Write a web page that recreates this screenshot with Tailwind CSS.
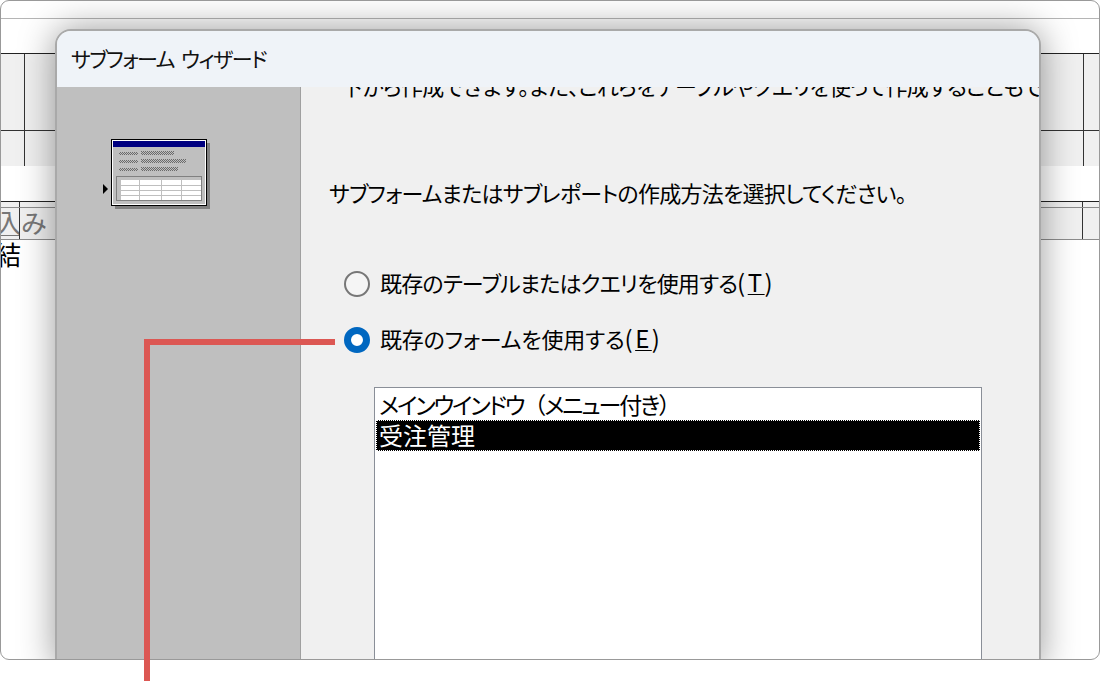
<!DOCTYPE html>
<html lang="ja">
<head>
  <meta charset="UTF-8">
  <title>サブフォーム ウィザード</title>
  <script src="https://cdn.jsdelivr.net/npm/@tailwindcss/browser@4"></script>
</head>
<body class="bg-white w-[1100px] h-[681px] overflow-hidden relative font-['Noto_Sans_CJK_JP',sans-serif] [font-feature-settings:'palt'] text-black">

  <!-- Background form design view, dialog sits on top and is clipped by the frame -->
  <div class="relative w-[1100px] h-[660px] border border-[#999] rounded-[9px] overflow-hidden bg-white">
    <div class="h-[18px] border-b border-[#b5b5b5]"></div>
    <div class="h-[35px] border-b border-[#222]"></div>
    <div class="h-[77px] border-b border-[#333] flex bg-[#f0f0f0]">
      <div class="w-[24px] border-r border-[#333]"></div>
      <div class="w-[1059px] border-r border-[#333]"></div>
    </div>
    <div class="h-[35px] flex bg-[#f0f0f0]">
      <div class="w-[24px] border-r border-[#333]"></div>
      <div class="w-[1059px] border-r border-[#333]"></div>
    </div>
    <div class="h-[36px] border-b border-[#222]"></div>
    <div class="h-[38px] border-b border-[#8c8c8c] flex relative bg-[#f0f0f0] text-[26px] leading-[30px] text-[#777]">
      <div class="w-[24px] border-r border-[#333] pt-[5px] -ml-[5px] pl-[5px] overflow-hidden"><span class="underline underline-offset-2 decoration-1 -ml-[5px]">入</span></div>
      <div class="w-[1063px] border-r border-[#333] pt-[5px] pl-[1px] whitespace-nowrap overflow-hidden">み<span class="ml-[9px] text-[#a5774f]">方</span></div>
      <div class="absolute left-0 right-0 top-[5px] border-t border-[#8c8c8c]"></div>
    </div>
    <div class="text-[26px] leading-[30px] -ml-[6px] -mt-px">結</div>

    <!-- Dialog window -->
    <div class="absolute left-[54px] top-[28px] w-[986px] h-[640px] border-2 border-[#a9a9a9] rounded-t-[16px] overflow-hidden flex flex-col shadow-[0_0_36px_rgba(0,0,0,0.4)] bg-[#f0f0f0]">
      <div class="h-[56px] bg-[#eff3f8] shrink-0 pl-[14px] text-[21px] tracking-[-1.5px] [word-spacing:4px] leading-[54px] text-[#111]">サブフォーム ウィザード</div>
      <div class="flex flex-1 min-h-0">
        <!-- Left picture panel -->
        <div class="w-[244px] shrink-0 bg-[#bfbfbf] border-r border-[#a0a0a0] pl-[46px] pt-[50px]">
          <svg width="110" height="74" viewBox="0 0 110 74" shape-rendering="crispEdges">
            <defs>
              <pattern id="dots" width="2" height="2" patternUnits="userSpaceOnUse">
                <rect width="1" height="1" fill="#6a6a6a"/><rect x="1" y="1" width="1" height="1" fill="#6a6a6a"/>
              </pattern>
            </defs>
            <path d="M0 47 l5 5 l-5 5 z" fill="#000" shape-rendering="auto"/>
            <rect x="12" y="6" width="95" height="66" fill="#808080"/>
            <rect x="8" y="2" width="96" height="67" fill="#000"/>
            <rect x="9" y="3" width="94" height="65" fill="#fff"/>
            <rect x="10" y="4" width="92" height="63" fill="#bfbfbf"/>
            <rect x="10" y="4" width="92" height="6" fill="#000080"/>
            <rect x="16" y="15" width="19" height="3" fill="url(#dots)"/>
            <rect x="38" y="14" width="33" height="4" fill="url(#dots)"/>
            <rect x="16" y="23" width="19" height="3" fill="url(#dots)"/>
            <rect x="38" y="22" width="45" height="4" fill="url(#dots)"/>
            <rect x="16" y="31" width="19" height="3" fill="url(#dots)"/>
            <rect x="38" y="30" width="37" height="4" fill="url(#dots)"/>
            <rect x="13" y="39" width="86" height="25" fill="#808080"/>
            <rect x="14" y="40" width="84" height="23" fill="#fff"/>
            <rect x="14" y="40" width="84" height="3" fill="#bfbfbf"/>
            <rect x="14" y="40" width="4" height="23" fill="#bfbfbf"/>
            <path d="M14 48h84M14 53h84M14 58h84M36 40v23M58 40v23M78 40v23" stroke="#bfbfbf" fill="none"/>
          </svg>
        </div>
        <!-- Right content -->
        <div class="flex-1 min-w-0 overflow-hidden">
          <p class="-mt-[15px] pl-[40px] h-[26px] whitespace-nowrap text-[22px] tracking-[-0.75px] leading-[26px]">下から作成できます。また、これらをテーブルやクエリを使って作成することもでき</p>
          <p class="mt-[78px] pl-[28px] text-[22px] tracking-[-0.75px] leading-[32px] whitespace-nowrap">サブフォームまたはサブレポートの作成方法を選択してください。</p>
          <div class="mt-[58px] pl-[43px] flex items-center gap-[10px] h-[32px] text-[22px] tracking-[-0.8px] whitespace-nowrap">
            <span class="w-[26px] h-[26px] mt-[3px] rounded-full border-2 border-[#777] bg-[#f5f5f5]"></span>
            <span>既存のテーブルまたはクエリを使用する<span class="text-[24px] tracking-[2.5px]">(<span class="underline underline-offset-2 decoration-1">T</span>)</span></span>
          </div>
          <div class="mt-[24px] pl-[43px] flex items-center gap-[10px] h-[32px] text-[22px] tracking-[-0.15px] whitespace-nowrap">
            <span class="w-[26px] h-[26px] mt-[3px] rounded-full border-[7px] border-[#0067c0] bg-white"></span>
            <span>既存のフォームを使用する<span class="text-[24px] tracking-[2.5px]">(<span class="underline underline-offset-2 decoration-1">E</span>)</span></span>
          </div>
          <!-- List box -->
          <div class="ml-[73px] mt-[33px] w-[608px] h-[400px] bg-white border border-[#8a8f98] pt-[1px] px-[1px]">
            <div class="h-[31px] leading-[30px] pl-[3px] whitespace-nowrap text-[23px] tracking-[-2.1px]">メインウインドウ<span class="[font-feature-settings:normal]">（</span>メニュー付き<span class="[font-feature-settings:normal]">）</span></div>
            <div class="h-[31px] leading-[28px] pl-[2px] bg-black text-white text-[24px] border border-dotted border-white">受注管理</div>
          </div>
        </div>
      </div>
    </div>
  </div>

  <!-- Callout line -->
  <div class="absolute left-[145px] top-[339px] w-[190px] h-[6px] bg-[#dc5753]"></div>
  <div class="absolute left-[144px] top-[339px] w-[6px] h-[342px] bg-[#dc5753]"></div>
</body>
</html>
